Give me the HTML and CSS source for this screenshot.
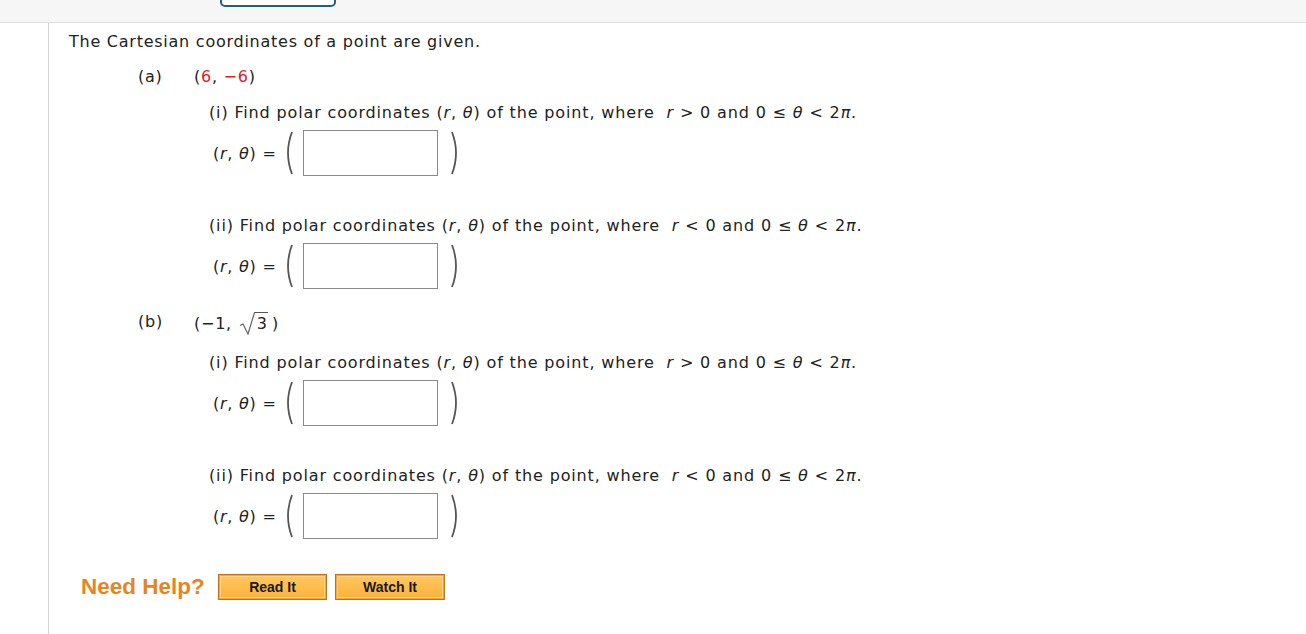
FILE: index.html
```html
<!DOCTYPE html>
<html>
<head>
<meta charset="utf-8">
<link rel="stylesheet" href="styles.css">
</head>
<body>
<div class="topbar"><div class="tab"></div></div>
<div class="main">
  <div class="content">
    <p class="intro">The Cartesian coordinates of a point are given.</p>

    <div class="part part-a">
      <span class="plabel">(a)</span>
      <span class="pval">(<span class="red">6</span>, <span class="red">−6</span>)</span>
    </div>
    <div class="sub sub-first">(i) Find polar coordinates (<i>r</i>, <i>θ</i>) of the point, where&nbsp; <i>r</i> &gt; 0 and 0 ≤ <i>θ</i> &lt; 2<i>π</i>.</div>
    <div class="eq">
      <span class="eqlabel">(<i>r</i>, <i>θ</i>) =</span>
      <svg class="paren" width="10" height="44" viewBox="0 0 10 44"><path d="M8 1 Q0 22 8 43" fill="none" stroke="#555" stroke-width="1.8"/></svg>
      <span class="box"></span>
      <svg class="paren rparen" width="10" height="44" viewBox="0 0 10 44"><path d="M2 1 Q10 22 2 43" fill="none" stroke="#555" stroke-width="1.8"/></svg>
    </div>
    <div class="sub sub-second">(ii) Find polar coordinates (<i>r</i>, <i>θ</i>) of the point, where&nbsp; <i>r</i> &lt; 0 and 0 ≤ <i>θ</i> &lt; 2<i>π</i>.</div>
    <div class="eq">
      <span class="eqlabel">(<i>r</i>, <i>θ</i>) =</span>
      <svg class="paren" width="10" height="44" viewBox="0 0 10 44"><path d="M8 1 Q0 22 8 43" fill="none" stroke="#555" stroke-width="1.8"/></svg>
      <span class="box"></span>
      <svg class="paren rparen" width="10" height="44" viewBox="0 0 10 44"><path d="M2 1 Q10 22 2 43" fill="none" stroke="#555" stroke-width="1.8"/></svg>
    </div>

    <div class="part part-b">
      <span class="plabel">(b)</span>
      <span class="pval">(−1, <span class="sqrt"><svg class="radsign" width="16" height="23" viewBox="0 0 16 23"><path d="M1 13.5 L4 12 L9 22 L15.5 0.5 L16 0.5" fill="none" stroke="#666" stroke-width="1.2"/></svg><span class="radicand">3</span></span>)</span>
    </div>
    <div class="sub sub-first">(i) Find polar coordinates (<i>r</i>, <i>θ</i>) of the point, where&nbsp; <i>r</i> &gt; 0 and 0 ≤ <i>θ</i> &lt; 2<i>π</i>.</div>
    <div class="eq">
      <span class="eqlabel">(<i>r</i>, <i>θ</i>) =</span>
      <svg class="paren" width="10" height="44" viewBox="0 0 10 44"><path d="M8 1 Q0 22 8 43" fill="none" stroke="#555" stroke-width="1.8"/></svg>
      <span class="box"></span>
      <svg class="paren rparen" width="10" height="44" viewBox="0 0 10 44"><path d="M2 1 Q10 22 2 43" fill="none" stroke="#555" stroke-width="1.8"/></svg>
    </div>
    <div class="sub sub-second">(ii) Find polar coordinates (<i>r</i>, <i>θ</i>) of the point, where&nbsp; <i>r</i> &lt; 0 and 0 ≤ <i>θ</i> &lt; 2<i>π</i>.</div>
    <div class="eq">
      <span class="eqlabel">(<i>r</i>, <i>θ</i>) =</span>
      <svg class="paren" width="10" height="44" viewBox="0 0 10 44"><path d="M8 1 Q0 22 8 43" fill="none" stroke="#555" stroke-width="1.8"/></svg>
      <span class="box"></span>
      <svg class="paren rparen" width="10" height="44" viewBox="0 0 10 44"><path d="M2 1 Q10 22 2 43" fill="none" stroke="#555" stroke-width="1.8"/></svg>
    </div>

    <div class="help">
      <span class="needhelp">Need Help?</span>
      <span class="btn btn-read">Read It</span>
      <span class="btn btn-watch">Watch It</span>
    </div>
  </div>
</div>
</body>
</html>
```
FILE: styles.css
```css
html, body {
  margin: 0;
  padding: 0;
  background: #ffffff;
}
body {
  font-family: "DejaVu Sans", Verdana, sans-serif;
  font-size: 16px;
  letter-spacing: 0.75px;
  color: #222222;
  width: 1306px;
  height: 634px;
  overflow: hidden;
}
.topbar {
  height: 22px;
  background: #f6f6f6;
  border-bottom: 1px solid #dedede;
  position: relative;
}
.tab {
  position: absolute;
  left: 220px;
  top: -6px;
  width: 112px;
  height: 9px;
  border: 2px solid #1f5e8e;
  border-radius: 5px;
  background: #ffffff;
}
.main {
  margin-left: 48px;
  border-left: 1px solid #d4d4d4;
  height: 611px;
}
.content {
  padding-top: 9px;
  padding-left: 20px;
}
.intro {
  margin: 0;
  line-height: 20px;
  height: 20px;
}
.part {
  display: flex;
  line-height: 20px;
  height: 20px;
  margin-top: 15px;
  padding-left: 69px;
}
.part-b {
  margin-top: 23px;
}
.plabel {
  width: 56px;
}
.red {
  color: #e0201c;
}
.sub {
  line-height: 20px;
  height: 20px;
  padding-left: 140px;
  white-space: nowrap;
  letter-spacing: 0.85px;
}
.sub-first {
  margin-top: 16px;
}
.part-b + .sub-first {
  margin-top: 21px;
}
.sub-second {
  margin-top: 40px;
}
.eq {
  display: flex;
  align-items: center;
  height: 46px;
  margin-top: 7px;
  padding-left: 144px;
}
.eqlabel {
  width: 71px;
  white-space: nowrap;
}
.paren {
  display: block;
}
.box {
  display: block;
  width: 133px;
  height: 44px;
  border: 1px solid #8a8a8a;
  margin-left: 9px;
  margin-right: 12px;
  background: #fff;
}
.sqrt {
  display: inline-flex;
  align-items: flex-start;
  vertical-align: -6px;
  height: 23px;
  margin-left: 1px;
  margin-right: 4px;
}
.radsign {
  display: block;
}
.radicand {
  border-top: 1px solid #555;
  line-height: 22px;
  height: 22px;
  padding: 0 1px 0 2px;
  letter-spacing: 0;
}
.help {
  display: flex;
  align-items: center;
  margin-top: 35px;
  padding-left: 12px;
  height: 26px;
  letter-spacing: 0;
}
.needhelp {
  font-family: "Liberation Sans", Arial, sans-serif;
  font-weight: bold;
  font-size: 22.5px;
  color: #e8841f;
  width: 137px;
}
.btn {
  display: flex;
  align-items: center;
  justify-content: center;
  box-sizing: border-box;
  height: 26px;
  border: 1px solid #c4701a;
  box-shadow: inset 0 0 0 1px #f7a53c, inset 0 0 0 2px #ffd58c;
  background: linear-gradient(#ffc85e, #fbb13b);
  font-family: "Liberation Sans", Arial, sans-serif;
  font-weight: bold;
  font-size: 14px;
  color: #1a1a1a;
}
.btn-read {
  width: 109px;
}
.btn-watch {
  width: 110px;
  margin-left: 8px;
}
```
